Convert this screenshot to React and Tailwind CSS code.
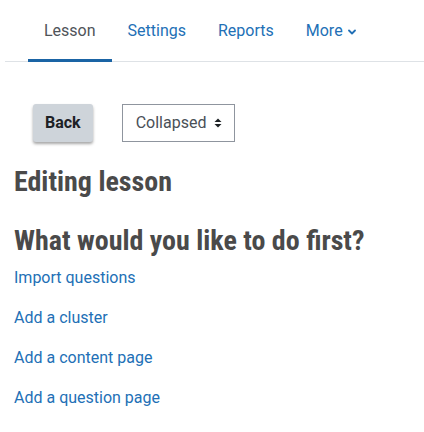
const tabs = [
  { label: "Lesson", active: true },
  { label: "Settings" },
  { label: "Reports" },
  { label: "More", menu: true },
];

const actions = [
  "Import questions",
  "Add a cluster",
  "Add a content page",
  "Add a question page",
];

export default function App() {
  return (
    <div className="min-h-[432px] bg-white font-['Roboto','Liberation_Sans',sans-serif] text-base text-[#1d2125]">
      {/* Secondary navigation */}
      <div className="ml-[5px] flex border-b border-[#dee2e6] pl-[23px]">
        {tabs.map((tab) => (
          <a
            key={tab.label}
            href="#"
            className={
              tab.active
                ? "-mb-px flex items-center border-b-[3px] border-[#1a64a5] px-4 pt-[19px] pb-[16px] leading-6 text-[#4f5459]"
                : "-mb-px flex items-center border-b-[3px] border-transparent px-4 pt-[19px] pb-[16px] leading-6 text-[#2270b6]"
            }
          >
            {tab.label}
            {tab.menu && (
              <svg width="8" height="6" viewBox="0 0 8 6" className="ml-[5px] mt-[2px]">
                <path d="M1 1.5 L4 4.5 L7 1.5" fill="none" stroke="#2270b6" strokeWidth="1.8" strokeLinecap="round" strokeLinejoin="round" />
              </svg>
            )}
          </a>
        ))}
      </div>

      {/* Tertiary navigation */}
      <div className="mt-[42px] flex items-start gap-[30px] pl-[33px]">
        <button className="h-[38px] rounded-[3px] bg-[#ced4da] px-3 font-bold leading-6 text-[#1d2125] shadow-[0_2px_3px_rgba(0,0,0,0.35)]">
          Back
        </button>
        <div className="-ml-px flex h-[38px] w-[113px] items-center border border-[#8f959e] pl-[13px] leading-6 text-[#495057]">
          Collapsed
          <svg width="8" height="10" viewBox="0 0 8 10" className="ml-[8px]">
            <path d="M0.5 4 L4 0.5 L7.5 4 Z" fill="#1d2125" />
            <path d="M0.5 6 L4 9.5 L7.5 6 Z" fill="#1d2125" />
          </svg>
        </div>
      </div>

      <div className="px-[14px]">
        <h2 className="mt-[23px] font-['Roboto','Liberation_Sans_Narrow',sans-serif] text-[28px] leading-[34px] font-bold text-[#4a4a4a] [font-stretch:75%]">
          Editing lesson
        </h2>
        <h3 className="mt-[25px] font-['Roboto','Liberation_Sans_Narrow',sans-serif] text-[28px] leading-[34px] font-bold text-[#4a4a4a] [font-stretch:75%]">
          What would you like to do first?
        </h3>

        <div className="mt-[8px] flex flex-col gap-4">
          {actions.map((action) => (
            <a key={action} href="#" className="leading-6 text-[#2270b6]">
              {action}
            </a>
          ))}
        </div>
      </div>
    </div>
  );
}
